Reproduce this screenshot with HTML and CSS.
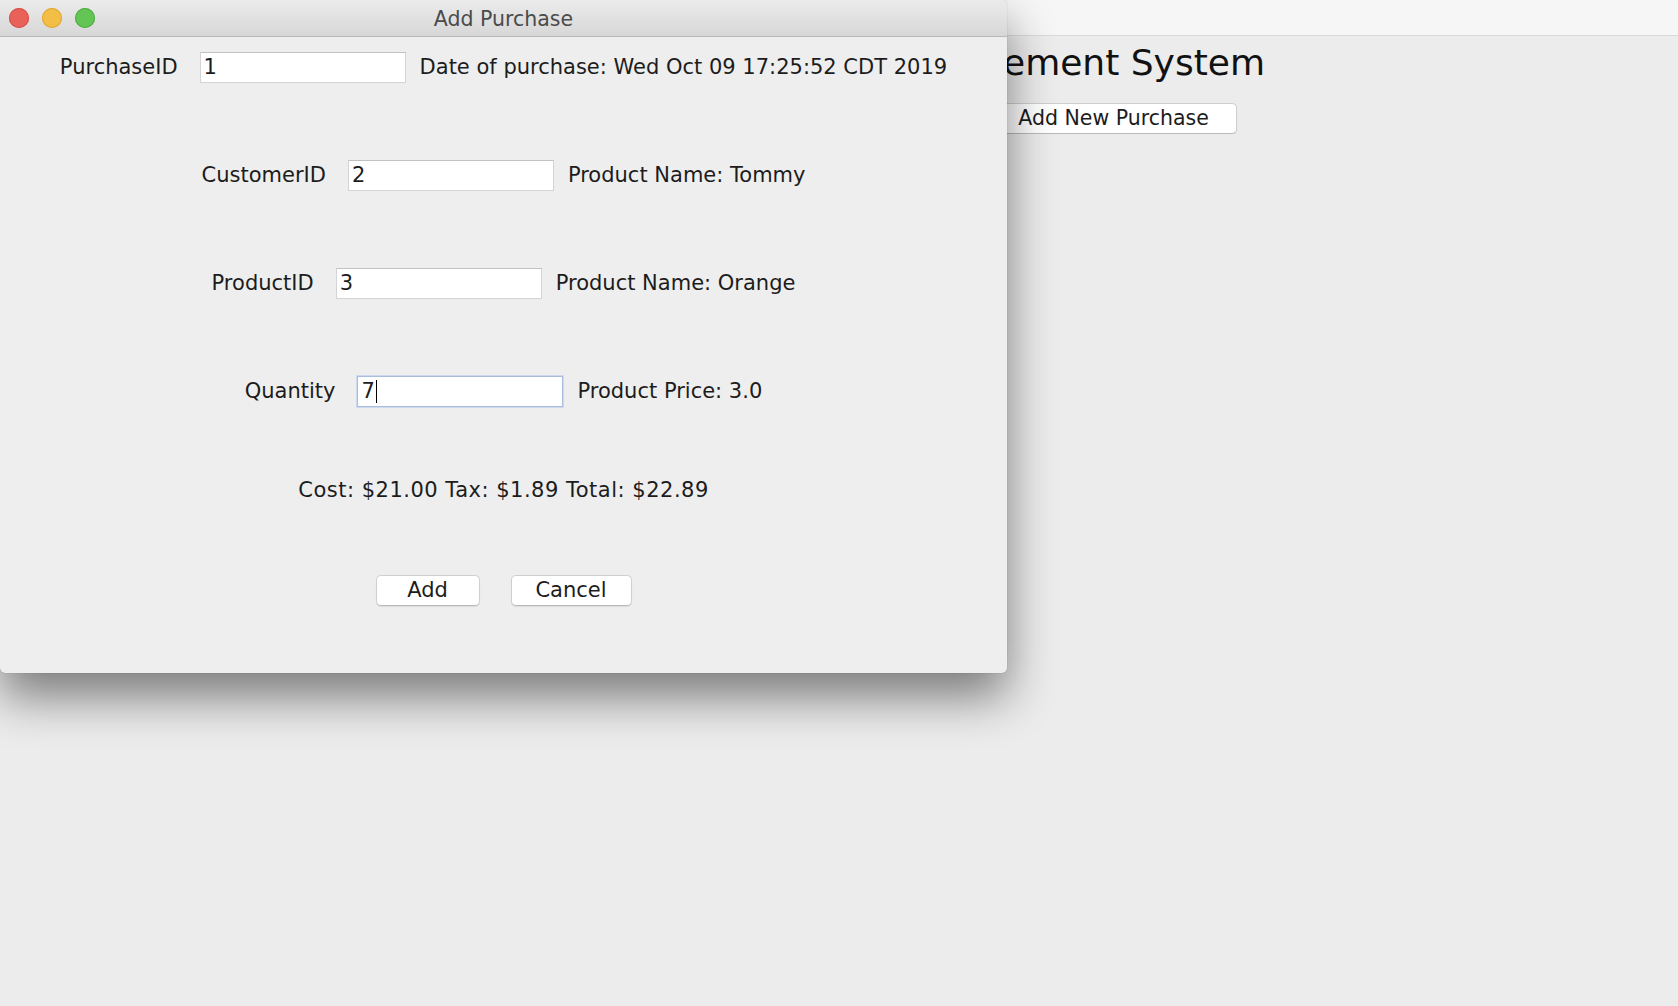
FILE: index.html
```html
<!DOCTYPE html>
<html>
<head>
<meta charset="utf-8">
<title>Add Purchase</title>
<link rel="stylesheet" href="styles.css">
</head>
<body>
<div class="desktop">
  <div class="main-window">
    <div class="main-titlebar"></div>
    <div class="main-content">
      <h1 class="main-heading">Management System</h1>
      <div class="main-buttons">
        <button class="btn btn-main">Add New Purchase</button>
      </div>
    </div>
  </div>

  <div class="dialog">
    <div class="dialog-titlebar">
      <div class="lights">
        <span class="light light-red"></span>
        <span class="light light-yellow"></span>
        <span class="light light-green"></span>
      </div>
      <div class="dialog-title">Add Purchase</div>
    </div>
    <div class="dialog-body">
      <div class="row row-field">
        <span class="label">PurchaseID</span>
        <div class="field">1</div>
        <span class="info">Date of purchase: Wed Oct 09 17:25:52 CDT 2019</span>
      </div>
      <div class="row row-field">
        <span class="label">CustomerID</span>
        <div class="field">2</div>
        <span class="info">Product Name: Tommy</span>
      </div>
      <div class="row row-field">
        <span class="label">ProductID</span>
        <div class="field">3</div>
        <span class="info">Product Name: Orange</span>
      </div>
      <div class="row row-field">
        <span class="label">Quantity</span>
        <div class="field field-focus">7<span class="caret"></span></div>
        <span class="info">Product Price: 3.0</span>
      </div>
      <div class="row row-cost">
        <span class="info cost">Cost: $21.00 Tax: $1.89 Total: $22.89</span>
      </div>
      <div class="row row-buttons">
        <button class="btn btn-add">Add</button>
        <button class="btn btn-cancel">Cancel</button>
      </div>
    </div>
  </div>
</div>
</body>
</html>
```

FILE: styles.css
```css
html, body {
  margin: 0;
  padding: 0;
}

body {
  width: 1678px;
  height: 1006px;
  overflow: hidden;
  background: #ececec;
  font-family: "DejaVu Sans", "Liberation Sans", sans-serif;
  color: #1c1c1c;
}

.desktop {
  position: relative;
  width: 1678px;
  height: 1006px;
}

/* ---------- main window (behind) ---------- */
.main-window {
  display: flex;
  flex-direction: column;
  height: 100%;
  background: #ececec;
}

.main-titlebar {
  height: 35px;
  background: #f6f6f6;
  border-bottom: 1px solid #dadada;
  flex: none;
}

.main-content {
  display: flex;
  flex-direction: column;
  align-items: flex-end;
  margin-left: 1007px;
  padding-right: 413px;
  overflow: hidden;
}

.main-heading {
  margin: 7px 0 0 0;
  font-size: 36px;
  font-weight: normal;
  line-height: 40px;
  color: #111;
  white-space: nowrap;
}

.main-buttons {
  display: flex;
  margin-top: 20px;
  margin-right: 28px;
}

.btn {
  font-family: "DejaVu Sans", "Liberation Sans", sans-serif;
  font-size: 21px;
  color: #1c1c1c;
  background: #ffffff;
  border: 1px solid #cfcfcf;
  border-bottom-color: #b9b9b9;
  border-radius: 5px;
  height: 31px;
  padding: 0;
  line-height: 29px;
  box-shadow: 0 1px 1px rgba(0, 0, 0, 0.08);
}

.btn-main {
  width: 247px;
  font-size: 20.5px;
}

/* ---------- dialog ---------- */
.dialog {
  position: absolute;
  left: 0;
  top: 0;
  width: 1007px;
  height: 673px;
  background: #eeeeee;
  border-radius: 0 5px 5px 5px;
  box-shadow: 0 24px 48px rgba(0, 0, 0, 0.48), 0 0 1px rgba(0, 0, 0, 0.35);
  display: flex;
  flex-direction: column;
  overflow: hidden;
}

.dialog-titlebar {
  position: relative;
  height: 36px;
  flex: none;
  background: linear-gradient(#ebebeb, #d7d7d7);
  border-bottom: 1px solid #b8b8b8;
  display: flex;
  align-items: center;
  justify-content: center;
}

.lights {
  position: absolute;
  left: 9px;
  top: 8px;
  display: flex;
  gap: 13px;
}

.light {
  width: 20px;
  height: 20px;
  border-radius: 50%;
  display: block;
}

.light-red {
  background: #e9625a;
  box-shadow: inset 0 0 0 1px #d8514a;
}

.light-yellow {
  background: #f2be45;
  box-shadow: inset 0 0 0 1px #dfa834;
}

.light-green {
  background: #62c554;
  box-shadow: inset 0 0 0 1px #52ad45;
}

.dialog-title {
  font-size: 20.5px;
  color: #4b4b4b;
  padding-top: 2px;
}

.dialog-body {
  display: flex;
  flex-direction: column;
  padding-top: 10px;
}

.row {
  display: flex;
  align-items: center;
  justify-content: center;
  height: 40px;
  font-size: 21px;
  white-space: nowrap;
}

.row-field + .row-field {
  margin-top: 68px;
}

.row-cost {
  margin-top: 59px;
}

.cost {
  letter-spacing: 0.5px;
}

.row-buttons {
  margin-top: 60px;
  gap: 31px;
}

.label {
  margin-right: 22px;
}

.field {
  width: 206px;
  height: 31px;
  box-sizing: border-box;
  background: #ffffff;
  border: 1px solid #d4d4d4;
  border-top-color: #c2c2c2;
  padding-left: 3px;
  line-height: 29px;
  margin-right: 14px;
  display: flex;
  align-items: center;
}

.field-focus {
  border: 1px solid #a9bcdc;
  box-shadow: 0 0 0 1px #cddaf0;
  padding-left: 3px;
}

.caret {
  display: inline-block;
  width: 1px;
  height: 23px;
  background: #000;
  margin-left: 1px;
}

.btn-add {
  width: 104px;
}

.btn-cancel {
  width: 121px;
}
```
